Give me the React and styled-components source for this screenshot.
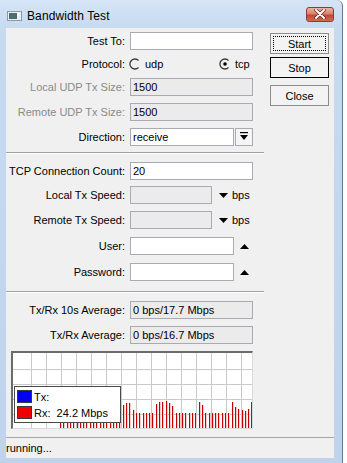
import React from "react";
import styled, { createGlobalStyle } from "styled-components";

const GlobalStyle = createGlobalStyle`
  html, body {
    margin: 0;
    padding: 0;
    background: #ffffff;
  }
  body {
    font-family: "Liberation Sans", Arial, sans-serif;
    font-size: 11px;
    color: #000000;
  }
`;

const Window = styled.div`
  width: 343px;
  height: 463px;
  box-sizing: border-box;
  background: linear-gradient(180deg, #d6e5f6 0px, #c6daf0 28px, #bfd4ec 100%);
  border-right: 1px solid #5f7896;
  border-top-right-radius: 6px;
  display: flex;
  flex-direction: column;
  overflow: hidden;
`;

const TitleBar = styled.div`
  height: 28px;
  flex: none;
  display: flex;
  align-items: center;
  padding: 3px 8px 0 7px;
  box-sizing: border-box;
`;

const TitleText = styled.span`
  font-size: 12px;
  margin-left: 5px;
  color: #000;
  letter-spacing: 0.1px;
`;

const CloseBox = styled.div`
  margin-left: auto;
  margin-top: -3px;
  width: 28px;
  height: 15px;
  box-sizing: border-box;
  border: 1px solid #8b3b33;
  border-radius: 3px;
  background: linear-gradient(180deg, #eab3a6 0%, #d9826f 45%, #c54633 55%, #cf6b56 100%);
  display: flex;
  align-items: center;
  justify-content: center;
`;

const Client = styled.div`
  flex: 1;
  margin: 0 8px 5px 6px;
  background: #f0f0f0;
  display: flex;
  flex-direction: column;
`;

const Main = styled.div`
  flex: 1;
  display: flex;
`;

const Form = styled.div`
  width: 264px;
  padding-top: 1px;
  display: flex;
  flex-direction: column;
`;

const Row = styled.div`
  height: ${(p) => p.h}px;
  display: flex;
  align-items: center;
`;

const Label = styled.div`
  width: 119px;
  margin-right: 5px;
  text-align: right;
  white-space: nowrap;
  color: ${(p) => (p.dim ? "#8a8a8a" : "#000")};
`;

const Field = styled.div`
  width: ${(p) => p.w}px;
  height: 18px;
  box-sizing: border-box;
  border: 1px solid #a9abb0;
  background: ${(p) => (p.off ? "#ebebeb" : "#ffffff")};
  padding-left: 2px;
  line-height: 16px;
  white-space: nowrap;
  overflow: hidden;
`;

const DropButton = styled.div`
  width: 18px;
  height: 18px;
  margin-left: 1px;
  box-sizing: border-box;
  border: 1px solid #a9abb0;
  background: #f4f4f4;
  display: flex;
  align-items: center;
  justify-content: center;
`;

const Arrow = styled.svg`
  margin-left: ${(p) => p.ml}px;
  flex: none;
`;

const Unit = styled.span`
  margin-left: 4px;
`;

const RadioGroup = styled.div`
  display: flex;
  align-items: center;
  margin-left: -1px;
`;

const RadioItem = styled.label`
  display: flex;
  align-items: center;
  gap: 4px;
  width: ${(p) => p.w}px;
`;

const Divider = styled.div`
  height: 0;
  width: 258px;
  border-top: 1px solid #a0a0a0;
  border-bottom: 1px solid #ffffff;
  margin: ${(p) => p.m};
`;

const GraphBox = styled.div`
  position: relative;
  margin: 4px 0 0 5px;
  width: 242px;
  height: 78px;
  box-sizing: border-box;
  border-top: 2px solid #6b6b6b;
  border-left: 2px solid #6b6b6b;
  border-right: 1px solid #dadada;
  border-bottom: 1px solid #dadada;
  background: #ffffff;
`;

const Legend = styled.div`
  position: absolute;
  left: 1px;
  top: 33px;
  width: 107px;
  height: 37px;
  box-sizing: border-box;
  border: 1px solid #4a4a4a;
  background: #ffffff;
  padding: 3px 0 0 2px;
  display: flex;
  flex-direction: column;
  gap: 3px;
`;

const LegendRow = styled.div`
  display: flex;
  align-items: center;
  height: 13px;
  white-space: pre;
`;

const Swatch = styled.span`
  width: 15px;
  height: 13px;
  box-sizing: border-box;
  border: 1px solid #3a3a3a;
  background: ${(p) => p.color};
  margin-right: 2px;
`;

const Buttons = styled.div`
  display: flex;
  flex-direction: column;
  padding-top: 5px;
`;

const Button = styled.div`
  width: 59px;
  height: 21px;
  margin-bottom: ${(p) => p.mb}px;
  box-sizing: border-box;
  border: 1px solid ${(p) => (p.main ? "#000000" : "#8c8c8c")};
  background: #f3f3f3;
  display: flex;
  align-items: center;
  justify-content: center;
  font-family: "Liberation Sans Narrow", "Liberation Sans", Arial, sans-serif;
  font-size: 11px;
  position: relative;

  ${(p) =>
    p.focus &&
    `&::after {
      content: "";
      position: absolute;
      inset: 2px;
      border: 1px dotted #000;
    }`}
`;

const StatusBar = styled.div`
  height: 21px;
  box-sizing: border-box;
  border-top: 1px solid #a6a6a6;
  display: flex;
  align-items: center;
`;

const WinIcon = () => (
  <svg width="15" height="10" viewBox="0 0 15 10">
    <rect x="0.5" y="0.5" width="14" height="9" fill="#e9eef2" stroke="#8c9aa6" />
    <rect x="2" y="2" width="8" height="6" fill="#4d6d70" />
    <rect x="10.5" y="1.5" width="2" height="3" fill="#ffffff" />
  </svg>
);

const CloseX = () => (
  <svg width="12" height="10" viewBox="0 0 12 10">
    <path d="M2 1 L10 9 M10 1 L2 9" stroke="#6a2018" strokeWidth="3.4" strokeLinecap="round" />
    <path d="M2 1 L10 9 M10 1 L2 9" stroke="#ffffff" strokeWidth="2" strokeLinecap="round" />
  </svg>
);

const Radio = ({ on }) => (
  <svg width="12" height="12" viewBox="0 0 12 12">
    <path d="M9.5 2.5 A5 5 0 1 0 9.5 9.5" fill="none" stroke="#3a3a3a" strokeWidth="1.3" />
    {on && <circle cx="6" cy="6" r="1.8" fill="#000" />}
  </svg>
);

const DownIcon = ({ ml }) => (
  <Arrow ml={ml} width="9" height="5" viewBox="0 0 9 5">
    <path d="M0 0 H9 L4.5 5 Z" fill="#000" />
  </Arrow>
);

const UpIcon = ({ ml }) => (
  <Arrow ml={ml} width="9" height="5" viewBox="0 0 9 5">
    <path d="M0 5 H9 L4.5 0 Z" fill="#000" />
  </Arrow>
);

const ComboIcon = () => (
  <svg width="8" height="9" viewBox="0 0 8 9">
    <rect x="0" y="0" width="8" height="1.2" fill="#000" />
    <path d="M0 3 H8 L4 8 Z" fill="#000" />
  </svg>
);

const barHeight = (x) => {
  const peaks = [
    [120, 124, 23], [125, 129, 25], [130, 133, 18],
    [154, 156, 24], [157, 163, 26], [164, 167, 27], [168, 170, 25], [171, 173, 22],
    [196, 200, 26], [201, 204, 23],
    [229, 232, 26], [233, 235, 21], [236, 238, 19], [239, 244, 18], [245, 247, 17],
    [248, 250, 19], [251, 253, 26],
  ];
  for (const [a, b, h] of peaks) if (x >= a && x <= b) return h;
  return 15;
};

const Graph = () => {
  const bars = [];
  for (let i = 0; i < 59; i++) {
    const px = Math.round(60 + i * 3.3);
    bars.push({ x: px - 13 + 0.5, h: barHeight(px) });
  }
  const vlines = [];
  for (let x = 18; x < 239; x += 15) vlines.push(x + 0.5);
  const hlines = [16.5, 31.5, 46.5, 61.5];
  return (
    <svg width="239" height="75" viewBox="0 0 239 75" style={{ display: "block" }}>
      {vlines.map((x) => (
        <line key={"v" + x} x1={x} y1="0" x2={x} y2="75" stroke="#c9c9c9" />
      ))}
      {hlines.map((y) => (
        <line key={"h" + y} x1="0" y1={y} x2="239" y2={y} stroke="#c9c9c9" />
      ))}
      {bars.map((b, i) => (
        <g key={i}>
          <line x1={b.x + 1} y1={75 - b.h} x2={b.x + 1} y2="75" stroke="#f7caca" />
          <line x1={b.x} y1={75 - b.h} x2={b.x} y2="75" stroke="#c40000" />
        </g>
      ))}
    </svg>
  );
};

export default function App() {
  return (
    <>
      <GlobalStyle />
      <Window>
        <TitleBar>
          <WinIcon />
          <TitleText>Bandwidth Test</TitleText>
          <CloseBox>
            <CloseX />
          </CloseBox>
        </TitleBar>
        <Client>
          <Main>
            <Form>
              <Row h={23}>
                <Label>Test To:</Label>
                <Field w={123} />
              </Row>
              <Row h={23}>
                <Label>Protocol:</Label>
                <RadioGroup>
                  <RadioItem w={90}>
                    <Radio />
                    <span>udp</span>
                  </RadioItem>
                  <RadioItem w={40}>
                    <Radio on />
                    <span>tcp</span>
                  </RadioItem>
                </RadioGroup>
              </Row>
              <Row h={24}>
                <Label dim>Local UDP Tx Size:</Label>
                <Field w={123} off>1500</Field>
              </Row>
              <Row h={25}>
                <Label dim>Remote UDP Tx Size:</Label>
                <Field w={123} off>1500</Field>
              </Row>
              <Row h={25}>
                <Label>Direction:</Label>
                <Field w={104}>receive</Field>
                <DropButton>
                  <ComboIcon />
                </DropButton>
              </Row>

              <Divider m="3px 0 5px" />

              <Row h={24}>
                <Label>TCP Connection Count:</Label>
                <Field w={123}>20</Field>
              </Row>
              <Row h={24}>
                <Label>Local Tx Speed:</Label>
                <Field w={82} off />
                <DownIcon ml={7} />
                <Unit>bps</Unit>
              </Row>
              <Row h={26}>
                <Label>Remote Tx Speed:</Label>
                <Field w={82} off />
                <DownIcon ml={7} />
                <Unit>bps</Unit>
              </Row>
              <Row h={26}>
                <Label>User:</Label>
                <Field w={104} />
                <UpIcon ml={6} />
              </Row>
              <Row h={26}>
                <Label>Password:</Label>
                <Field w={104} />
                <UpIcon ml={6} />
              </Row>

              <Divider m="6px 0 5px" />

              <Row h={24}>
                <Label>Tx/Rx 10s Average:</Label>
                <Field w={123} off>0 bps/17.7 Mbps</Field>
              </Row>
              <Row h={25}>
                <Label>Tx/Rx Average:</Label>
                <Field w={123} off>0 bps/16.7 Mbps</Field>
              </Row>

              <GraphBox>
                <Graph />
                <Legend>
                  <LegendRow>
                    <Swatch color="#0000f0" />
                    <span>Tx:</span>
                  </LegendRow>
                  <LegendRow>
                    <Swatch color="#f00000" />
                    <span>Rx:  24.2 Mbps</span>
                  </LegendRow>
                </Legend>
              </GraphBox>
            </Form>
            <Buttons>
              <Button focus mb={3}>Start</Button>
              <Button main mb={7}>Stop</Button>
              <Button mb={0}>Close</Button>
            </Buttons>
          </Main>
          <StatusBar>running...</StatusBar>
        </Client>
      </Window>
    </>
  );
}
